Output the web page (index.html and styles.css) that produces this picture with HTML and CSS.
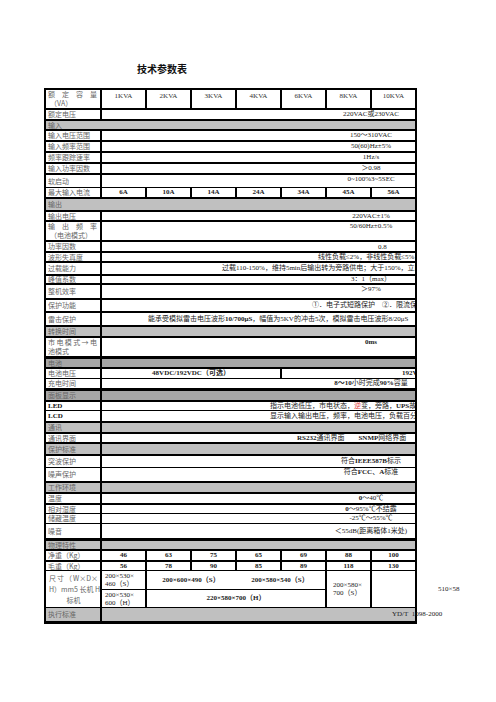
FILE: index.html
```html
<!DOCTYPE html>
<html lang="zh">
<head>
<meta charset="utf-8">
<title>技术参数表</title>
<link rel="stylesheet" href="styles.css">
</head>
<body>
<div class="page">
  <h1 class="title">技术参数表</h1>
  <table class="spec">
    <colgroup>
      <col class="c-label"><col class="c-v"><col class="c-v"><col class="c-v"><col class="c-v"><col class="c-v"><col class="c-v"><col class="c-v">
    </colgroup>
    <tr class="h20">
      <td class="lab jl top"><span class="jline">额定容量</span><span class="ind">（VA）</span></td>
      <td class="hd">1KVA</td><td class="hd">2KVA</td><td class="hd">3KVA</td><td class="hd">4KVA</td><td class="hd">6KVA</td><td class="hd">8KVA</td><td class="hd">10KVA</td>
    </tr>
    <tr class="h11"><td class="lab">额定电压</td><td colspan="7" class="val"><span class="w">220VAC或230VAC</span></td></tr>
    <tr class="h10"><td colspan="8" class="sec lab">输入</td></tr>
    <tr class="h11"><td class="lab">输入电压范围</td><td colspan="7" class="val"><span class="w">150～310VAC</span></td></tr>
    <tr class="h11"><td class="lab">输入频率范围</td><td colspan="7" class="val"><span class="w">50(60)Hz±5%</span></td></tr>
    <tr class="h11"><td class="lab">频率跟踪速率</td><td colspan="7" class="val"><span class="w">1Hz/s</span></td></tr>
    <tr class="h11"><td class="lab">输入功率因数</td><td colspan="7" class="val"><span class="w">＞0.98</span></td></tr>
    <tr class="h14"><td class="lab">软启动</td><td colspan="7" class="val top"><span class="w">0~100%3~5SEC</span></td></tr>
    <tr class="h10 tl">
      <td class="lab">最大输入电流</td>
      <td class="num">6A</td><td class="num">10A</td><td class="num">14A</td><td class="num">24A</td><td class="num">34A</td><td class="num">45A</td><td class="num">56A</td>
    </tr>
    <tr class="h13"><td colspan="8" class="sec lab">输出</td></tr>
    <tr class="h10"><td class="lab">输出电压</td><td colspan="7" class="val"><span class="w">220VAC±1%</span></td></tr>
    <tr class="h20"><td class="lab jl top"><span class="jline">输出频率</span><span class="ind">（电池模式）</span></td><td colspan="7" class="val top"><span class="w">50/60Hz±0.5%</span></td></tr>
    <tr class="h11"><td class="lab">功率因数</td><td colspan="7" class="val bot"><span class="pf">0.8</span></td></tr>
    <tr class="h10"><td class="lab">波形失真度</td><td colspan="7" class="val"><span class="o-thd">线性负载≤2%，非线性负载≤5%</span></td></tr>
    <tr class="h13"><td class="lab">过载能力</td><td colspan="7" class="val"><span class="o-ovl">过载110-150%，维持5min后输出转为旁路供电；大于150%，立即转为旁路</span></td></tr>
    <tr class="h9"><td class="lab">峰值系数</td><td colspan="7" class="val"><span class="w">3：1（max）</span></td></tr>
    <tr class="h15"><td class="lab">整机效率</td><td colspan="7" class="val top"><span class="w">＞97%</span></td></tr>
    <tr class="h13"><td class="lab">保护功能</td><td colspan="7" class="val"><span class="o-prot">①．电子式短路保护　②．限流保护为额定电流</span></td></tr>
    <tr class="h14"><td class="lab">雷击保护</td><td colspan="7" class="val"><span class="o-ltn">能承受模拟雷击电压波形<b>10/700μS</b>，幅值为5KV的冲击5次，模拟雷击电压波形8/20μS</span></td></tr>
    <tr class="h11"><td class="sec lab">转换时间</td><td colspan="7" class="sec"></td></tr>
    <tr class="h20"><td class="lab jl top"><span class="jline">市电模式→电</span><span>池模式</span></td><td colspan="7" class="val top"><span class="w"><b>0ms</b></span></td></tr>
    <tr class="h11 t3"><td class="sec dark lab">电池</td><td colspan="7" class="sec dark"></td></tr>
    <tr class="h11">
      <td class="lab">电池电压</td>
      <td colspan="4" class="num"><b>48VDC/192VDC</b>（可选）</td>
      <td colspan="3" class="val"><span class="o-bat"><b>192VDC</b></span></td>
    </tr>
    <tr class="h10 tl"><td class="lab">充电时间</td><td colspan="7" class="val"><span class="w"><b>8～10</b>小时完成<b>90%</b>容量</span></td></tr>
    <tr class="h12 t3"><td class="sec dark lab">面板显示</td><td colspan="7" class="sec dark"></td></tr>
    <tr class="h10"><td class="lab strong">LED</td><td colspan="7" class="val"><span class="o-led">指示电池低压，市电状态，<em class="red">逆</em>变，旁路，<b>UPS</b>故障</span></td></tr>
    <tr class="h11 tl"><td class="lab strong">LCD</td><td colspan="7" class="val"><span class="o-led">显示输入输出电压，频率，电池电压，负载百分比</span></td></tr>
    <tr class="h11"><td class="sec lab">通讯</td><td colspan="7" class="sec"></td></tr>
    <tr class="h10"><td class="lab">通讯界面</td><td colspan="7" class="val"><span class="o-com"><b>RS232</b>通讯界面　　<b>SNMP</b>网络界面</span></td></tr>
    <tr class="h12"><td class="sec lab">保护标准</td><td colspan="7" class="sec"></td></tr>
    <tr class="h13"><td class="lab">突波保护</td><td colspan="7" class="val"><span class="w">符合<b>IEEE587B</b>标示</span></td></tr>
    <tr class="h14 tl"><td class="lab">噪声保护</td><td colspan="7" class="val top"><span class="w">符合<b>FCC</b>、<b>A</b>标准</span></td></tr>
    <tr class="h11"><td class="sec lab">工作环境</td><td colspan="7" class="sec"></td></tr>
    <tr class="h11"><td class="lab">温度</td><td colspan="7" class="val"><span class="w"><b>0</b>～40℃</span></td></tr>
    <tr class="h10"><td class="lab">相对湿度</td><td colspan="7" class="val"><span class="w"><b>0</b>～95%℃不结露</span></td></tr>
    <tr class="h10 tl"><td class="lab">储藏温度</td><td colspan="7" class="val"><span class="w">-25℃～55%℃</span></td></tr>
    <tr class="h15 tl"><td class="lab">噪音</td><td colspan="7" class="val"><span class="w">＜55dB(距离箱体1米处)</span></td></tr>
    <tr class="h11 t3"><td class="sec lab">物理特性</td><td colspan="7" class="sec"></td></tr>
    <tr class="h11">
      <td class="lab">净重（Kg）</td>
      <td class="num">46</td><td class="num">63</td><td class="num">75</td><td class="num">65</td><td class="num">69</td><td class="num">88</td><td class="num">100</td>
    </tr>
    <tr class="h10">
      <td class="lab">毛重（Kg）</td>
      <td class="num">56</td><td class="num">78</td><td class="num">90</td><td class="num">85</td><td class="num">89</td><td class="num">118</td><td class="num">130</td>
    </tr>
    <tr class="h19 tl">
      <td rowspan="2" class="lab dimlab"><span class="jline">尺寸（W×D×</span><span class="jline">H）mm5 长机 H</span><span class="cline">标机</span></td>
      <td class="dim">200×530×<br>460（S）</td>
      <td colspan="2" class="num">200×600×490（S）</td>
      <td colspan="2" class="num nol">200×580×540（S）</td>
      <td rowspan="2" class="dim dim8">200×580×<br>700（S）</td>
      <td rowspan="2" class="dim dimx">510×58</td>
    </tr>
    <tr class="h18 tl">
      <td class="dim">200×530×<br>600（H）</td>
      <td colspan="4" class="num">220×580×700（H）</td>
    </tr>
    <tr class="h14 tl"><td class="sec lab">执行标准</td><td colspan="7" class="sec val vis"><span class="o-std">YD/T&nbsp;&nbsp;1098-2000</span></td></tr>
  </table>
</div>
</body>
</html>
```

FILE: styles.css
```css
html, body {
  margin: 0;
  padding: 0;
  background: #ffffff;
}

body {
  font-family: "Liberation Serif", "Noto Sans CJK SC", serif;
  color: #222222;
}

.page {
  padding-top: 62px;
}

.title {
  margin: 0 0 0 137px;
  height: 26px;
  font-family: "Noto Sans CJK SC", sans-serif;
  font-weight: 700;
  font-size: 10px;
  line-height: 14px;
  color: #111111;
}

.spec {
  margin-left: 44px;
  width: 373px;
  table-layout: fixed;
  border-collapse: separate;
  border-spacing: 0;
  border-right: 2px solid #000;
  border-bottom: 3px solid #000;
}

.c-label { width: 56px; }
.c-v { width: 45px; }

.spec td {
  border-top: 2px solid #000;
  border-left: 2px solid #000;
  padding: 0;
  font-size: 7px;
  line-height: 7px;
  white-space: nowrap;
  overflow: hidden;
  vertical-align: middle;
  color: #222222;
}

.spec tr.tl > td { border-top-width: 1px; }
.spec tr.t3 > td { border-top-width: 3px; }

.h9 { height: 9px; }
.h10 { height: 10px; }
.h11 { height: 11px; }
.h12 { height: 12px; }
.h13 { height: 13px; }
.h14 { height: 14px; }
.h15 { height: 15px; }
.h18 { height: 18px; }
.h19 { height: 19px; }
.h20 { height: 20px; }

.spec td.lab {
  padding-left: 2px;
  color: #666666;
  font-family: "Noto Sans CJK SC", sans-serif;
  font-size: 7px;
}

.spec td.strong {
  color: #111111;
  font-family: "Liberation Serif", serif;
  font-weight: 700;
}

.spec td.jl {
  white-space: normal;
  padding-right: 3px;
  line-height: 9px;
}

.spec td.jl.top { padding-top: 0; }

.jline {
  display: block;
  text-align: justify;
  text-align-last: justify;
  text-justify: inter-character;
}

.cline {
  display: block;
  text-align: center;
}

.ind {
  display: block;
  padding-left: 2px;
}

.spec td.top { vertical-align: top; padding-top: 1px; }
.spec td.bot { vertical-align: bottom; }

.spec td.hd {
  text-align: center;
  vertical-align: top;
  padding-top: 3px;
  color: #333333;
}

.spec td.num {
  text-align: center;
  font-weight: 700;
  color: #222222;
}

.spec td.sec {
  background: #c0c0c0;
}

.spec td.sec.dark {
  background: #a6a6a6;
}

.spec td.nol { border-left: 0; }

.spec td.vis { overflow: visible; }

.w {
  display: block;
  width: 538px;
  text-align: center;
}

.pf { display: block; padding-left: 276px; }
.o-thd { display: block; padding-left: 216px; }
.o-ovl { display: block; padding-left: 120px; }
.o-prot { display: block; padding-left: 210px; }
.o-ltn { display: block; padding-left: 46px; }
.o-bat { display: block; padding-left: 120px; }
.o-led { display: block; padding-left: 168px; }
.o-com { display: block; padding-left: 195px; }
.o-std { display: block; padding-left: 290px; }

.red {
  font-style: normal;
  color: #e0403c;
}

.spec td.dimlab {
  white-space: nowrap;
  line-height: 11px;
  padding: 0 2px 0 3px;
}

.spec td.dim {
  white-space: nowrap;
  text-align: left;
  padding-left: 3px;
  line-height: 8px;
}

.spec td.dim8 { padding-left: 6px; }

.spec td.dimx {
  overflow: visible;
  padding-left: 66px;
}
```
